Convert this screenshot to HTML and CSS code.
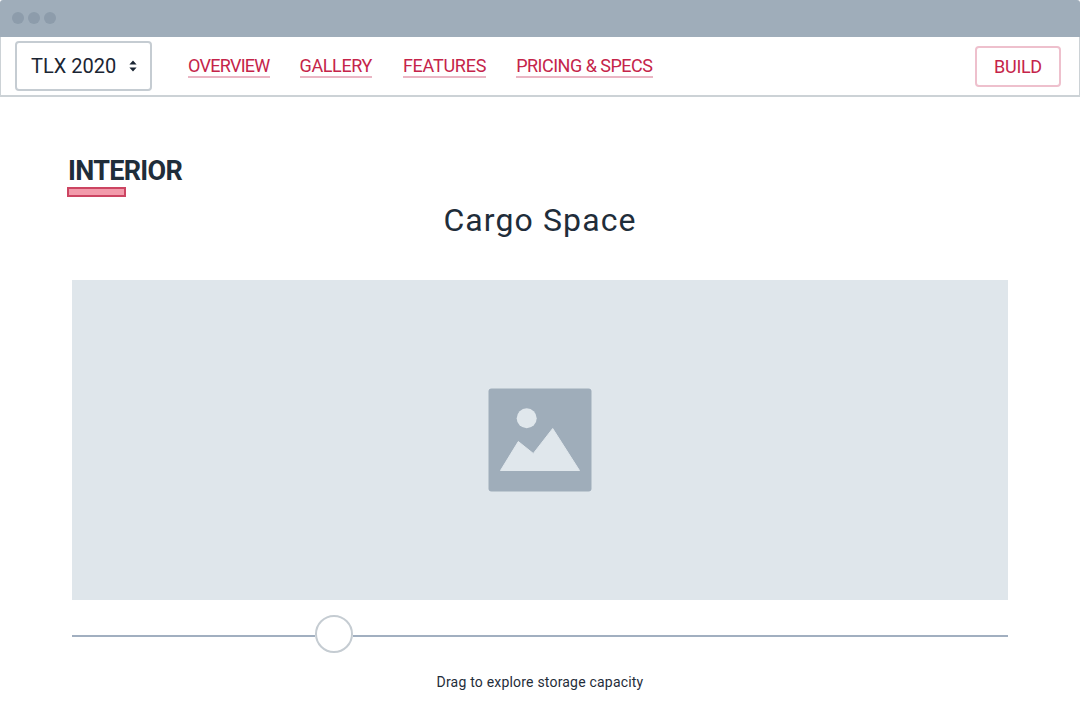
FILE: index.html
```html
<!DOCTYPE html>
<html lang="en">
<head>
<meta charset="utf-8">
<title>TLX 2020 Interior</title>
<link rel="stylesheet" href="styles.css">
</head>
<body>
<div class="titlebar">
  <span class="dot"></span><span class="dot"></span><span class="dot"></span>
</div>
<nav class="navbar">
  <div class="select">
    <span>TLX 2020</span>
    <svg class="carets" width="8" height="12" viewBox="0 0 8 12"><path d="M4 0.5 L7.6 4.5 H0.4 Z M0.4 7.5 H7.6 L4 11.5 Z" fill="#1a2533"/></svg>
  </div>
  <ul class="links">
    <li><a class="link link-overview">OVERVIEW</a></li>
    <li><a class="link link-gallery">GALLERY</a></li>
    <li><a class="link link-features">FEATURES</a></li>
    <li><a class="link link-pricing">PRICING &amp; SPECS</a></li>
  </ul>
  <a class="build">BUILD</a>
</nav>
<main class="content">
  <div class="section-head">
    <h2 class="eyebrow">INTERIOR</h2>
    <div class="accent"></div>
  </div>
  <h1 class="title">Cargo Space</h1>
  <div class="media">
    <svg width="104" height="104" viewBox="0 0 104 104">
      <rect x="0.5" y="0.5" width="103" height="103" rx="3" fill="#9fadba"/>
      <circle cx="38.7" cy="30.3" r="10" fill="#e0e7ec"/>
      <path d="M12.5 82.5 L30.3 53.5 L45.3 65.5 L64.7 40.5 L91.5 82.5 Z" fill="#e0e7ec" stroke="#e0e7ec" stroke-width="1" stroke-linejoin="round"/>
    </svg>
  </div>
  <div class="slider">
    <div class="track"></div>
    <div class="thumb"></div>
    <div class="track track-rest"></div>
  </div>
  <p class="caption">Drag to explore storage capacity</p>
</main>
</body>
</html>
```

FILE: styles.css
```css
* { box-sizing: border-box; }
html, body { margin: 0; padding: 0; background: #fff; }
body {
  width: 1080px;
  height: 720px;
  overflow: hidden;
  font-family: Roboto, "Liberation Sans", sans-serif;
  color: #1f2d3a;
}
.titlebar {
  height: 37px;
  background: #9fadba;
  display: flex;
  align-items: center;
  gap: 4px;
  padding: 0 0 1px 12px;
  border-radius: 3px 3px 0 0;
}
.dot {
  width: 12px;
  height: 12px;
  border-radius: 50%;
  background: #8d9cab;
}
.navbar {
  height: 60px;
  display: flex;
  align-items: center;
  padding: 0 18px 0 14px;
  border-left: 1px solid #ccd2d6;
  border-right: 1px solid #ccd2d6;
  border-bottom: 2px solid #ccd2d6;
}
.select {
  width: 137px;
  height: 50px;
  border: 2px solid #c5ccd2;
  border-radius: 4px;
  display: flex;
  align-items: center;
  justify-content: space-between;
  padding: 0 13px 0 14px;
  font-size: 20px;
  color: #1a2533;
}
.links {
  list-style: none;
  display: flex;
  gap: 30px;
  margin: 2px 0 0 36px;
  padding: 0;
  flex: 1;
}
.link {
  display: block;
  font-size: 18px;
  line-height: 20px;
  color: #c5244a;
  border-bottom: 2px solid #eab6c4;
}
.link-overview { letter-spacing: -0.72px; }
.link-gallery { letter-spacing: -0.4px; }
.link-features { letter-spacing: -0.25px; margin-left: 1px; }
.link-pricing { letter-spacing: -0.5px; }
.build {
  width: 86px;
  height: 41px;
  border: 2px solid #eec0cd;
  border-radius: 4px;
  display: flex;
  align-items: center;
  justify-content: center;
  font-size: 18px;
  letter-spacing: -0.3px;
  color: #c5244a;
}
.content {
  padding: 59px 72px 0;
}
.section-head {
  margin-left: -5px;
  height: 41px;
}
.eyebrow {
  margin: 0 0 0 1px;
  font-size: 27px;
  line-height: 30px;
  font-weight: 700;
  letter-spacing: -0.7px;
  color: #1f2d3a;
}
.accent {
  width: 59px;
  height: 10px;
  margin-top: 1px;
  background: #f29bab;
  border: 2px solid #cc4562;
}
.title {
  margin: 0;
  text-align: center;
  font-size: 32px;
  line-height: 46px;
  font-weight: 400;
  letter-spacing: 1.1px;
  color: #1f2d3a;
}
.media {
  margin-top: 37px;
  height: 320px;
  background: #dfe6eb;
  display: flex;
  align-items: center;
  justify-content: center;
}
.slider {
  display: flex;
  align-items: center;
  height: 38px;
  margin-top: 15px;
}
.track {
  width: 243px;
  height: 2px;
  margin-top: 3px;
  background: #a1afc0;
}
.track-rest { width: auto; flex: 1; }
.thumb {
  width: 38px;
  height: 38px;
  flex: none;
  border: 2px solid #c5ccd2;
  border-radius: 50%;
  background: #fff;
}
.caption {
  margin: 20px 0 0;
  text-align: center;
  font-size: 14px;
  line-height: 18px;
  letter-spacing: 0.2px;
  color: #1f2d3a;
}
```
